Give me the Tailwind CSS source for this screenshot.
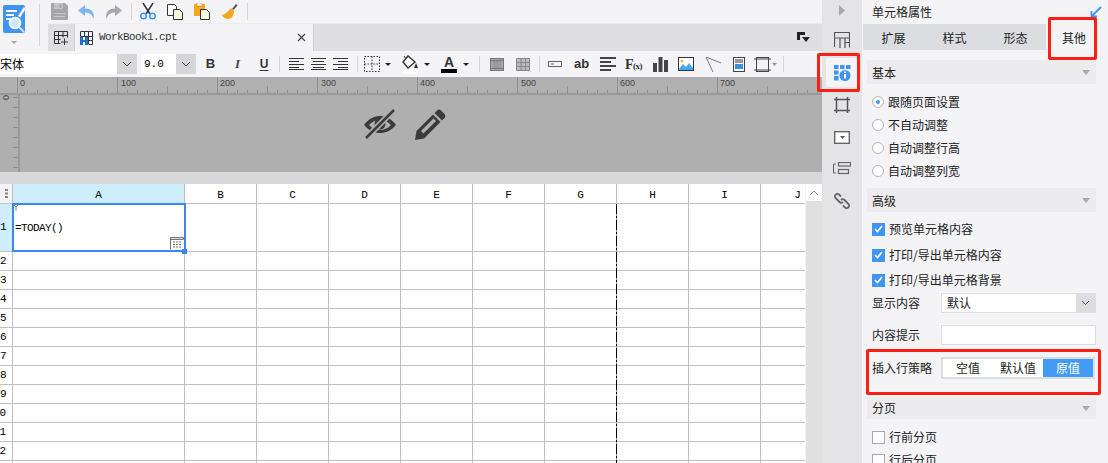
<!DOCTYPE html>
<html><head><meta charset="utf-8"><script src="https://cdn.jsdelivr.net/npm/@tailwindcss/browser@4"></script></head>
<body class="m-0 overflow-hidden bg-[#f4f4f7]">
<div class="relative flex w-[1108px] h-[463px] overflow-hidden text-[12px] text-[#222] font-['Noto_Sans_CJK_SC','Liberation_Sans',sans-serif]">
<!-- main -->
<div class="w-[822px] h-full flex flex-col shrink-0 overflow-hidden">
  <div class="flex h-[51px] shrink-0">
    <div class="w-[48px] h-full relative shrink-0">
      <svg class="ml-[3px] mt-[5px]" width="24" height="44" viewBox="0 0 24 44"><rect width="22" height="28" rx="2" fill="#3f95f4"/><path d="M3 6h11M3 10h8M3 14h5" stroke="#fff" stroke-width="2"/><path d="M15 11 21 2l2 1.500-6 9z" fill="#fff" stroke="#bbb" stroke-width=".5"/><circle cx="12" cy="18" r="5.500" fill="#cfe6fb" stroke="#fff" stroke-width="1.500"/><path d="M16 22l5 5" stroke="#ddd" stroke-width="2"/><path d="M8 36h6l-3 3z" fill="#a5a5a8"/></svg>
      <div class="absolute left-[39px] top-[4px] h-[42px] w-px bg-[#d6d6d9]"></div>
    </div>
    <div class="flex-1 flex flex-col">
      <div class="h-[23px] flex items-center pl-[3px] relative">
        <svg class="ml-[0px]" width="17" height="17" viewBox="0 0 17 17"><path d="M1 0h13l3 3v13a1 1 0 0 1-1 1H1a1 1 0 0 1-1-1V1a1 1 0 0 1 1-1z" fill="#a6a6a8"/><rect x="3" y="0" width="9" height="6" fill="#c4c4c6"/><rect x="8.500" y="1" width="2" height="4" fill="#a6a6a8"/><rect x="3" y="10" width="11" height="1" fill="#c9c9cb"/><rect x="3" y="13" width="11" height="1" fill="#c9c9cb"/></svg>
        <svg class="ml-[10px]" width="17" height="16" viewBox="0 0 17 16"><path d="M7 1 0 6.500 7 12V8.500c4 0 7 1.500 8.500 6.500 1.500-6-1.500-10.500-8.500-10.500z" fill="#7fb6ef"/></svg>
        <svg class="ml-[10px]" width="17" height="16" viewBox="0 0 17 16"><path d="M10 1l7 5.500L10 12V8.500c-4 0-7 1.500-8.500 6.500C0 9 3 4.500 10 4.500z" fill="#a9a9ab"/></svg>
        <div class="ml-[9px] w-px h-[17px] bg-[#d6d6d9]"></div>
        <svg class="ml-[8px]" width="16" height="17" viewBox="0 0 16 17"><path d="M3 0l7 11M13 0 6 11" stroke="#333" stroke-width="1.500"/><circle cx="3.500" cy="13" r="2.800" fill="none" stroke="#3f95f4" stroke-width="1.600"/><circle cx="12.500" cy="13" r="2.800" fill="none" stroke="#3f95f4" stroke-width="1.600"/></svg>
        <svg class="ml-[11px]" width="16" height="17" viewBox="0 0 16 17"><path d="M.5 1.500h7l2 2v9h-9z" fill="#fff" stroke="#333"/><path d="M6.500 6.500h6l3 3v7h-9z" fill="#fbf6df" stroke="#333"/></svg>
        <svg class="ml-[11px]" width="16" height="17" viewBox="0 0 16 17"><rect y="1" width="11" height="12" fill="#f5a81c"/><rect x="3" y="0" width="5" height="3" fill="#fff" stroke="#b87b10" stroke-width=".5"/><path d="M6.500 6.500h6l3 3v7h-9z" fill="#fbf6df" stroke="#333"/></svg>
        <svg class="ml-[11px]" width="17" height="17" viewBox="0 0 17 17"><path d="M11 6l4-5 1.500 1.500L12.500 7z" fill="#555"/><path d="M10 5 13 8c0 5-3 8-6 8-2 0-5-2-6.500-4 3 0 6-3 9.500-7z" fill="#f5a81c"/></svg>
        <div class="ml-[9px] w-px h-[17px] bg-[#d6d6d9]"></div>
      </div>
      <div class="h-[28px] flex bg-[#dfdfe2] border-t border-[#ececef]">
        <div class="w-[26px] flex items-center justify-center"><svg width="15" height="14" viewBox="0 0 15 14"><path d="M.5.500h13v6M.5.500v12h6M.5 4.500h13M.5 8.500h6M4.500.500v12M9 .500v6M7 11h7M10.500 7.500v6.500" fill="none" stroke="#333"/></svg></div>
        <div class="w-[240px] bg-[#f4f4f7] border-x border-[#d0d0d3] flex items-center pl-[5px]">
          <svg width="13" height="14" viewBox="0 0 13 14"><path d="M.5 5.500V.500h12v13H9M.5 5.500h12M4.500.500v5M8.500.500v13M12.500 9.500H8.500" fill="none" stroke="#333"/><path d="M0 6h3v8H0zM3 9h3v2H3zM5 6h3v8H5z" fill="#1d71c4"/></svg>
          <span class="ml-[6px] font-['Liberation_Mono',monospace] text-[11px] tracking-[-0.6px] text-[#333]">WorkBook1.cpt</span>
          <svg class="ml-auto mr-[7px]" width="9" height="9" viewBox="0 0 9 9"><path d="M1 1l7 7M8 1 1 8" stroke="#444" stroke-width="1.200"/></svg>
        </div>
        <svg class="ml-auto mr-[12px] mt-[8px]" width="13" height="11" viewBox="0 0 13 11"><path d="M0 0h8v3H3v5H0z" fill="#222"/><path d="M5 5h8l-4 5z" fill="#222"/></svg>
      </div>
    </div>
  </div>
  <!-- format toolbar -->
  <div class="h-[26px] shrink-0 flex items-start pt-[3px]">
    <div class="flex w-[137px] h-[20px] bg-white"><span class="flex-1 leading-[20px] text-[12px] text-black">宋体</span><span class="w-[20px] bg-[#d5d6d9] flex items-center justify-center"><svg width="10" height="6" viewBox="0 0 10 6"><path d="M1 1l4 4 4-4" fill="none" stroke="#444"/></svg></span></div>
    <div class="flex w-[55px] h-[20px] bg-white ml-[4px]"><span class="flex-1 pl-[3px] leading-[20px] font-['Liberation_Mono',monospace] text-[11px] text-black">9.0</span><span class="w-[20px] bg-[#d5d6d9] flex items-center justify-center"><svg width="10" height="6" viewBox="0 0 10 6"><path d="M1 1l4 4 4-4" fill="none" stroke="#444"/></svg></span></div>
    <div class="flex items-center h-[20px]">
      <span class="w-[27px] ml-[1px] text-center font-bold text-[13px] font-['Liberation_Sans'] text-[#333]">B</span>
      <span class="w-[27px] text-center italic font-bold text-[13px] font-['Liberation_Serif'] text-[#444]">I</span>
      <span class="w-[26px] text-center font-bold text-[12px] font-['Liberation_Sans'] text-[#333] underline underline-offset-2">U</span>
      <div class="w-px h-[16px] bg-[#d6d6d9] ml-[2px]"></div>
      <svg class="ml-[9px]" width="15" height="12" viewBox="0 0 15 12"><path d="M0 .500h15M0 3.500h10M0 6.500h15M0 9.500h10M0 11.500h15" stroke="#333"/></svg>
      <svg class="ml-[7px]" width="15" height="12" viewBox="0 0 15 12"><path d="M0 .500h15M2 3.500h11M0 6.500h15M2 9.500h11M0 11.500h15" stroke="#333"/></svg>
      <svg class="ml-[7px]" width="15" height="12" viewBox="0 0 15 12"><path d="M0 .500h15M5 3.500h10M0 6.500h15M5 9.500h10M0 11.500h15" stroke="#333"/></svg>
      <div class="w-px h-[16px] bg-[#d6d6d9] ml-[9px]"></div>
      <svg class="ml-[6px]" width="16" height="16" viewBox="0 0 16 16"><path d="M.5.500h15v15H.5zM.5 8h15M8 .500v15" fill="none" stroke="#333" stroke-dasharray="1.500 1.500"/></svg>
      <svg class="ml-[5px]" width="6" height="3" viewBox="0 0 6 3"><path d="M0 0h6L3 3z" fill="#222"/></svg>
      <svg class="ml-[11px]" width="16" height="19" viewBox="0 0 16 19"><path d="M6 1 1 7l5 6 7-6z" fill="#fff" stroke="#333" stroke-width="1.400"/><path d="M4 4 2 1" stroke="#333"/><path d="M14 8l2 5h-4z" fill="#333"/><rect y="15" width="16" height="4" fill="#fff"/></svg>
      <svg class="ml-[6px]" width="6" height="3" viewBox="0 0 6 3"><path d="M0 0h6L3 3z" fill="#222"/></svg>
      <span class="ml-[11px] w-[16px] flex flex-col items-center"><span class="font-bold font-['Liberation_Sans'] text-[14px] leading-[14px] text-[#333]">A</span><span class="w-[16px] h-[4px] bg-black"></span></span>
      <svg class="ml-[6px]" width="6" height="3" viewBox="0 0 6 3"><path d="M0 0h6L3 3z" fill="#222"/></svg>
      <div class="w-px h-[16px] bg-[#d6d6d9] ml-[10px]"></div>
      <svg class="ml-[10px]" width="14" height="13" viewBox="0 0 14 13"><rect x=".5" y=".5" width="13" height="12" fill="#a8a8a8" stroke="#777"/><path d="M0 2.500h14M0 10.500h14" stroke="#777"/><rect x="3" y="3" width="8" height="7" fill="#9a9a9a"/></svg>
      <svg class="ml-[12px]" width="14" height="13" viewBox="0 0 14 13"><path d="M.5.500h13v12H.5zM.5 4.500h13M.5 8.500h13M5 .500v12M9.500.500v12" fill="#bbb" stroke="#888"/></svg>
      <div class="w-px h-[16px] bg-[#d6d6d9] ml-[9px]"></div>
      <svg class="ml-[8px]" width="14" height="6" viewBox="0 0 14 6"><rect x=".5" y=".5" width="13" height="5" fill="none" stroke="#666"/><path d="M3 3h3" stroke="#666"/></svg>
      <span class="ml-[12px] w-[14px] text-center font-bold font-['Liberation_Sans'] text-[13px] text-[#333]">ab</span>
      <svg class="ml-[12px]" width="16" height="14" viewBox="0 0 16 14"><path d="M0 1h16M0 5h11M0 9h16M0 13h11" stroke="#444" stroke-width="2"/></svg>
      <span class="ml-[9px] w-[17px] font-['Liberation_Serif'] font-bold text-[14px] text-[#333] whitespace-nowrap tracking-[-0.5px]">F<span class="text-[9px]">(x)</span></span>
      <svg class="ml-[11px]" width="15" height="15" viewBox="0 0 15 15"><path d="M0 6h4v9H0zM5.500 0h4v15h-4zM11 3h4v12h-4z" fill="#444"/></svg>
      <svg class="ml-[10px]" width="16" height="14" viewBox="0 0 16 14"><rect x=".5" y=".5" width="15" height="13" fill="#fff" stroke="#333"/><path d="M1 12l4-5 3 3 3-4 4 5v2H1z" fill="#4aa8ee"/><circle cx="4" cy="4" r="1.500" fill="#f5b82e"/></svg>
      <svg class="ml-[11px]" width="16" height="15" viewBox="0 0 16 15"><path d="M1 0l15 6M1 0l7 15" stroke="#777" fill="none"/></svg>
      <svg class="ml-[12px]" width="12" height="15" viewBox="0 0 12 15"><rect x=".5" y=".5" width="11" height="14" fill="#fff" stroke="#444"/><path d="M2 3h8M2 5h8" stroke="#333"/><rect x="2" y="7" width="8" height="5" fill="#3f8fe0"/></svg>
      <svg class="ml-[9px]" width="23" height="15" viewBox="0 0 23 15"><path d="M2.500.500h12v14h-12zM0 2h17M0 13h17M2.500 0v15M14.500 0v15" fill="none" stroke="#444"/><path d="M18 6h5l-2.500 3z" fill="#999"/></svg>
      <div class="w-px h-[16px] bg-[#d6d6d9] ml-[6px]"></div>
    </div>
  </div>
  <!-- ruler -->
  <div class="h-[18px] shrink-0 bg-[#b0b0b0] border-b-2 border-[#999] relative overflow-hidden">
    <svg class="w-full h-[16px]" width="822" height="16"><defs><pattern id="rt" x="17" width="10" height="16" patternUnits="userSpaceOnUse"><path d="M.5 13v3" stroke="#8f8f8f"/></pattern><pattern id="rm" x="17" width="50" height="16" patternUnits="userSpaceOnUse"><path d="M.5 9v7" stroke="#8f8f8f"/></pattern><pattern id="rb" x="17" width="100" height="16" patternUnits="userSpaceOnUse"><path d="M.5 0v16" stroke="#8f8f8f"/></pattern></defs><rect x="18" width="804" height="16" fill="url(#rt)"/><rect x="18" width="804" height="16" fill="url(#rm)"/><rect x="17" width="805" height="16" fill="url(#rb)"/><g fill="#444" font-family="Liberation Sans" font-size="9"><text x="20" y="9">0</text><text x="121" y="9">100</text><text x="220" y="9">200</text><text x="321" y="9">300</text><text x="420" y="9">400</text><text x="521" y="9">500</text><text x="620" y="9">600</text><text x="720" y="9">700</text></g></svg>
  </div>
  <!-- band -->
  <div class="h-[77px] shrink-0 bg-[#afafaf] flex">
    <div class="w-[20px] h-full border-r-2 border-[#999] relative overflow-hidden"><svg width="18" height="77" viewBox="0 0 18 77"><defs><pattern id="vt" y="2" width="18" height="10" patternUnits="userSpaceOnUse"><path d="M13 .5h5" stroke="#8f8f8f"/></pattern></defs><rect width="18" height="77" fill="url(#vt)"/><text x="0" y="0" transform="translate(9,5) rotate(-90)" fill="#444" font-family="Liberation Sans" font-size="9">0</text></svg></div>
    <div class="flex-1 flex items-start pt-[14px] pl-[343px]">
      <svg width="34" height="31" viewBox="0 0 34 31"><path d="M1 16C6 9 12 7 17 7s11 2 16 9c-5 6-11 8-16 8S6 22 1 16z" fill="#3b3b3b"/><path d="M6 16c3-3.500 7-5 11-5s8 1.500 11 5c-3 3.500-7 5-11 5s-8-1.500-11-5z" fill="#afafaf"/><circle cx="17" cy="15" r="5.500" fill="#3b3b3b"/><path d="M2 30 31 1" stroke="#afafaf" stroke-width="6"/><path d="M3 29 31 1" stroke="#3b3b3b" stroke-width="2.500"/></svg>
      <svg class="ml-[18px]" width="31" height="31" viewBox="0 0 31 31"><path d="M22 1.500a3 3 0 0 1 4 0l3.500 3.500a3 3 0 0 1 0 4L27 11.500 19.500 4z" fill="#3b3b3b"/><path d="M18 5.500 25.500 13 9 29.500 0 31l1.500-9z" fill="#3b3b3b"/><path d="M18.500 9.500 6 22l2.500 2.500L21 12z" fill="#afafaf"/></svg>
    </div>
  </div>
  <div class="h-[12px] shrink-0 bg-[#d8d8da]"></div>
  <!-- grid -->
  <div class="flex-1 min-h-0 flex overflow-hidden">
    <div class="relative w-[805px] h-full bg-white overflow-hidden">
      <div class="grid grid-cols-[13px_172px_repeat(8,72px)_45px] grid-rows-[20px_48px_repeat(12,19px)] *:border-r *:border-b *:border-[#c0c0c0] *:overflow-hidden font-['Liberation_Mono',monospace] text-[11px] text-black">
        <div class="bg-[#f4f4f7] flex items-center justify-center"><svg width="3" height="9" viewBox="0 0 3 9"><path d="M0 0h3v2H0zM0 3.500h3v2H0zM0 7h3v2H0z" fill="#888"/></svg></div>
        <div class="bg-[#cfeefb] text-center leading-[23px]">A</div><div class="text-center leading-[23px]">B</div><div class="text-center leading-[23px]">C</div><div class="text-center leading-[23px]">D</div><div class="text-center leading-[23px]">E</div><div class="text-center leading-[23px]">F</div><div class="text-center leading-[23px]">G</div><div class="text-center leading-[23px]">H</div><div class="text-center leading-[23px]">I</div><div class="text-center leading-[23px] !border-r-0 pl-[28px]">J</div>
        <div class="bg-[#cfeefb] text-right pr-[10px] leading-[47px]">1</div>
        <div class="pl-[2px] pt-[14px] leading-[20px] tracking-[-0.6px] relative">=TODAY()</div><div></div><div></div><div></div><div></div><div></div><div></div><div></div><div></div><div class="!border-r-0"></div>
        <div class="text-right pr-[6px] leading-[18px]">2</div><div></div><div></div><div></div><div></div><div></div><div></div><div></div><div></div><div></div><div class="!border-r-0"></div>
        <div class="text-right pr-[6px] leading-[18px]">3</div><div></div><div></div><div></div><div></div><div></div><div></div><div></div><div></div><div></div><div class="!border-r-0"></div>
        <div class="text-right pr-[6px] leading-[18px]">4</div><div></div><div></div><div></div><div></div><div></div><div></div><div></div><div></div><div></div><div class="!border-r-0"></div>
        <div class="text-right pr-[6px] leading-[18px]">5</div><div></div><div></div><div></div><div></div><div></div><div></div><div></div><div></div><div></div><div class="!border-r-0"></div>
        <div class="text-right pr-[6px] leading-[18px]">6</div><div></div><div></div><div></div><div></div><div></div><div></div><div></div><div></div><div></div><div class="!border-r-0"></div>
        <div class="text-right pr-[6px] leading-[18px]">7</div><div></div><div></div><div></div><div></div><div></div><div></div><div></div><div></div><div></div><div class="!border-r-0"></div>
        <div class="text-right pr-[6px] leading-[18px]">8</div><div></div><div></div><div></div><div></div><div></div><div></div><div></div><div></div><div></div><div class="!border-r-0"></div>
        <div class="text-right pr-[6px] leading-[18px]">9</div><div></div><div></div><div></div><div></div><div></div><div></div><div></div><div></div><div></div><div class="!border-r-0"></div>
        <div class="pr-[6px] leading-[18px] flex justify-end whitespace-nowrap">10</div><div></div><div></div><div></div><div></div><div></div><div></div><div></div><div></div><div></div><div class="!border-r-0"></div>
        <div class="pr-[6px] leading-[18px] flex justify-end whitespace-nowrap">11</div><div></div><div></div><div></div><div></div><div></div><div></div><div></div><div></div><div></div><div class="!border-r-0"></div>
        <div class="pr-[6px] leading-[18px] flex justify-end whitespace-nowrap">12</div><div></div><div></div><div></div><div></div><div></div><div></div><div></div><div></div><div></div><div class="!border-r-0"></div>
        <div></div><div></div><div></div><div></div><div></div><div></div><div></div><div></div><div></div><div></div><div class="!border-r-0"></div>
      </div>
      <!-- selection overlay -->
      <div class="absolute left-[12px] top-[19px] w-[174px] h-[49px] border-[2px] border-[#3b88f0] pointer-events-none"></div>
      <div class="absolute left-[182px] top-[65px] w-[5px] h-[5px] bg-[#3b88f0]"></div>
      <svg class="absolute left-[170px] top-[53px]" width="14" height="13" viewBox="0 0 14 13"><path d="M.5.500h13v2H.5z" fill="#ddd" stroke="#777"/><path d="M.5.500v12M3 5h2M6 5h2M9 5h2M3 7.500h2M6 7.500h2M9 7.500h2M3 10h2M6 10h2M9 10h2" stroke="#777"/></svg>
      <svg class="absolute left-[14px] top-[20px]" width="4" height="7" viewBox="0 0 4 7"><path d="M0 1l2 2 2-2M2 3v4" stroke="#888" fill="none"/></svg>
      <div class="absolute left-[616px] top-[20px] w-px h-[260px] bg-[repeating-linear-gradient(to_bottom,#000_0,#000_10px,#999_10px,#999_12px,#000_12px,#000_14px,#999_14px,#999_16px)]"></div>
    </div>
    <div class="w-[17px] h-full bg-[#e0e0e0] border-l border-[#f4f4f7]"><div class="h-[17px] bg-white flex items-center justify-center"><svg width="10" height="6" viewBox="0 0 10 6"><path d="M1 5l4-4 4 4" fill="none" stroke="#888"/></svg></div></div>
  </div>
</div>
<!-- icon strip -->
<div class="w-[40px] h-full shrink-0 bg-[#e4e4e6] flex flex-col items-center">
  <svg class="mt-[5px] shrink-0" width="6" height="11" viewBox="0 0 6 11"><path d="M0 0l6 5.500L0 11z" fill="#a9a9ab"/></svg>
  <svg class="mt-[16px] shrink-0" width="16" height="16" viewBox="0 0 16 16"><path d="M.5 15V.5h15v15M.5 6h15M6 6v10M11 6v10M11 10.500h5" fill="none" stroke="#555" stroke-width="1.200"/></svg>
  <div class="mt-[10px] w-[34px] self-start ml-[4px] h-[29px] bg-[#f4f4f7] flex items-center justify-center shrink-0"><svg class="-ml-[2px]" width="17" height="16" viewBox="0 0 17 16"><path d="M0 0h4.500v4H0zM6 0h4.500v4H6zM12 0h4.500v4H12zM0 5.500h4.500v4H0zM0 11h4.500v4.500H0z" fill="#3f95f4"/><circle cx="11" cy="10.500" r="5.500" fill="#3f95f4"/><path d="M10 6.500h2v1.500h-2zM10 9h2v4.500h-2z" fill="#fff"/></svg></div>
  <svg class="mt-[10px] shrink-0" width="16" height="16" viewBox="0 0 16 16"><path d="M2.500 0v16M13.500 0v16M0 2.500h16M0 13.500h16" fill="none" stroke="#555" stroke-width="1.500"/></svg>
  <svg class="mt-[18px] shrink-0" width="16" height="13" viewBox="0 0 16 13"><rect x=".7" y=".7" width="14.600" height="11.600" fill="#fff" stroke="#666" stroke-width="1.400"/><path d="M6 5h5l-2.500 3z" fill="#555"/></svg>
  <svg class="mt-[18px] shrink-0" width="18" height="13" viewBox="0 0 18 13"><rect x="5.500" y=".5" width="12" height="3.500" fill="none" stroke="#666" stroke-width="1.200"/><rect x="5.500" y="7.500" width="10" height="4" fill="none" stroke="#666" stroke-width="1.200"/><path d="M3 2H.5v9H3" fill="none" stroke="#666"/></svg>
  <svg class="mt-[18px] shrink-0" width="16" height="16" viewBox="0 0 16 16"><path d="M7 3.500 5 1.500a2.500 2.500 0 0 0-3.500 3.500l4 4a2.500 2.500 0 0 0 3.500 0M9 12.500l2 2a2.500 2.500 0 0 0 3.500-3.500l-4-4a2.500 2.500 0 0 0-3.500 0" fill="none" stroke="#666" stroke-width="1.800"/></svg>
</div>
<!-- panel -->
<div class="w-[246px] h-full shrink-0 flex flex-col overflow-hidden bg-[#f4f4f7] pl-[1px]">
  <div class="h-[24px] flex items-center pl-[9px] pr-[6px] shrink-0"><span>单元格属性</span><svg class="ml-auto" width="12" height="12" viewBox="0 0 12 12"><path d="M11 1 2 10M1.500 5v5.500H7" fill="none" stroke="#3f95f4" stroke-width="1.800"/></svg></div>
  <div class="h-[26px] flex shrink-0 text-[12px] *:pt-[1px]"><div class="w-[61px] bg-[#dcdde0] flex items-center justify-center">扩展</div><div class="w-[61px] bg-[#dcdde0] flex items-center justify-center">样式</div><div class="w-[61px] bg-[#dcdde0] flex items-center justify-center">形态</div><div class="w-[50px] flex items-center justify-center ml-[3px]">其他</div></div>
  <div class="h-[24px] mt-[10px] mx-[4px] w-[229px] pt-[1px] bg-[#ececee] flex items-center pl-[5px] shrink-0"><span>基本</span><svg class="ml-auto mr-[6px]" width="8" height="5" viewBox="0 0 8 5"><path d="M0 0h8L4 5z" fill="#a9a9ab"/></svg></div>
  <div class="flex flex-col pl-[9px] pt-[8px] gap-y-[3px] shrink-0">
    <div class="flex items-center h-[20px]"><span class="w-[12px] h-[12px] rounded-full border border-[#b5b5b5] bg-white flex items-center justify-center"><span class="w-[4px] h-[4px] rounded-full bg-[#3f95f4]"></span></span><span class="ml-[4px]">跟随页面设置</span></div>
    <div class="flex items-center h-[20px]"><span class="w-[12px] h-[12px] rounded-full border border-[#b5b5b5] bg-white"></span><span class="ml-[4px]">不自动调整</span></div>
    <div class="flex items-center h-[20px]"><span class="w-[12px] h-[12px] rounded-full border border-[#b5b5b5] bg-white"></span><span class="ml-[4px]">自动调整行高</span></div>
    <div class="flex items-center h-[20px]"><span class="w-[12px] h-[12px] rounded-full border border-[#b5b5b5] bg-white"></span><span class="ml-[4px]">自动调整列宽</span></div>
  </div>
  <div class="h-[24px] mt-[7px] mx-[4px] w-[229px] pt-[1px] bg-[#ececee] flex items-center pl-[5px] shrink-0"><span>高级</span><svg class="ml-auto mr-[6px]" width="8" height="5" viewBox="0 0 8 5"><path d="M0 0h8L4 5z" fill="#a9a9ab"/></svg></div>
  <div class="flex flex-col pl-[9px] pt-[7px] shrink-0">
    <div class="flex items-center h-[20px]"><span class="w-[13px] h-[13px] bg-[#3f95f4] flex items-center justify-center"><svg width="9" height="8" viewBox="0 0 9 8"><path d="M1 4l2.500 2.500L8 1" fill="none" stroke="#fff" stroke-width="1.700"/></svg></span><span class="ml-[4px]">预览单元格内容</span></div>
    <div class="flex items-center h-[20px] mt-[6px]"><span class="w-[13px] h-[13px] bg-[#3f95f4] flex items-center justify-center"><svg width="9" height="8" viewBox="0 0 9 8"><path d="M1 4l2.500 2.500L8 1" fill="none" stroke="#fff" stroke-width="1.700"/></svg></span><span class="ml-[4px]">打印/导出单元格内容</span></div>
    <div class="flex items-center h-[20px] mt-[5px]"><span class="w-[13px] h-[13px] bg-[#3f95f4] flex items-center justify-center"><svg width="9" height="8" viewBox="0 0 9 8"><path d="M1 4l2.500 2.500L8 1" fill="none" stroke="#fff" stroke-width="1.700"/></svg></span><span class="ml-[4px]">打印/导出单元格背景</span></div>
  </div>
  <div class="flex items-center h-[20px] mt-[3px] pl-[9px] shrink-0"><span class="w-[69px]">显示内容</span><div class="w-[155px] h-[20px] bg-white border border-[#dcdde0] flex items-center pl-[5px]"><span>默认</span><span class="ml-auto w-[19px] h-[18px] bg-[#dcdde0] flex items-center justify-center"><svg width="9" height="6" viewBox="0 0 9 6"><path d="M1 1l3.500 3.500L8 1" fill="none" stroke="#444"/></svg></span></div></div>
  <div class="flex items-center h-[20px] mt-[12px] pl-[9px] shrink-0"><span class="w-[69px]">内容提示</span><div class="w-[155px] h-[20px] bg-white border border-[#dcdde0]"></div></div>
  <div class="flex items-center h-[22px] mt-[12px] pl-[9px] shrink-0"><span class="w-[70px]">插入行策略</span><div class="w-[154px] h-[22px] bg-white border-2 border-[#dcdde0] flex -ml-[1px]"><span class="w-[50px] text-center leading-[18px]">空值</span><span class="w-[50px] text-center leading-[18px]">默认值</span><span class="w-[50px] text-center leading-[18px] bg-[#429bf5] text-white">原值</span></div></div>
  <div class="h-[22px] mt-[18px] mx-[4px] w-[229px] bg-[#ececee] flex items-center pl-[5px] shrink-0"><span>分页</span><svg class="ml-auto mr-[6px]" width="8" height="5" viewBox="0 0 8 5"><path d="M0 0h8L4 5z" fill="#a9a9ab"/></svg></div>
  <div class="flex flex-col pl-[9px] pt-[8px] gap-y-[3px] shrink-0">
    <div class="flex items-center h-[20px]"><span class="w-[13px] h-[13px] bg-white border border-[#a9a9a9]"></span><span class="ml-[4px]">行前分页</span></div>
    <div class="flex items-center h-[20px]"><span class="w-[13px] h-[13px] bg-white border border-[#a9a9a9]"></span><span class="ml-[4px]">行后分页</span></div>
  </div>
</div>
<!-- red annotation boxes -->
<div class="absolute left-[1048px] top-[17px] w-[49px] h-[43px] border-[3px] border-[#ff1e14] rounded-[2px]"></div>
<div class="absolute left-[817px] top-[53px] w-[43px] h-[39px] border-[3px] border-[#ff1e14] rounded-[2px]"></div>
<div class="absolute left-[866px] top-[349px] w-[235px] h-[46px] border-[3px] border-[#ff1e14] rounded-[2px]"></div>
</div>
</body></html>
